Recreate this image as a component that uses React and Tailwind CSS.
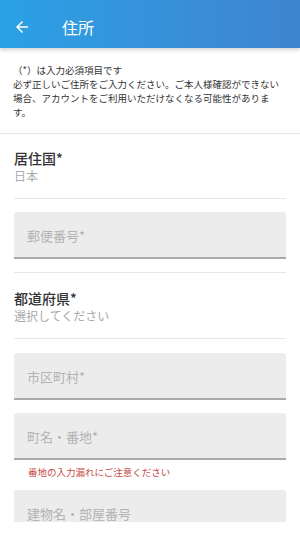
export default function App() {
  const jp = { fontFamily: '"Noto Sans CJK JP", "Noto Sans", sans-serif' };

  return (
    <div className="w-[300px] h-[556px] overflow-hidden bg-white" style={jp}>
      {/* Header */}
      <header className="relative z-10 h-12 pt-[5px] flex items-center bg-gradient-to-r from-[#29a1e6] to-[#3e84cf] text-white shadow-[0_2px_4px_rgba(0,0,0,0.18)]">
        <svg className="ml-[13px] w-[18px] h-[18px]" viewBox="0 0 24 24" fill="currentColor">
          <path d="M20 11H7.83l5.59-5.59L12 4l-8 8 8 8 1.41-1.41L7.83 13H20v-2z" />
        </svg>
        <h1 className="ml-[31px] text-[16px] leading-none font-normal">住所</h1>
      </header>

      {/* Intro */}
      <section className="pl-[13px] pr-[16px] pt-[15px] pb-[14px] border-b border-[#e6e6e6] text-[9.5px] leading-[14px] text-[#333]">
        <p>（*）は入力必須項目です</p>
        <p>必ず正しいご住所をご入力ください。ご本人様確認ができない場合、アカウントをご利用いただけなくなる可能性があります。</p>
      </section>

      {/* Form */}
      <section className="px-[14px]">
        <div className="pt-[14px] pb-[14px] border-b border-[#e6e6e6]">
          <div className="text-[14px] leading-[20px] font-medium text-[#333]">居住国*</div>
          <div className="text-[12px] leading-[16px] text-[#aaa]">日本</div>
        </div>

        <div className="mt-[13px] h-[47px] flex items-center pl-[13px] pt-[3px] bg-[#ececec] border-b-2 border-[#aaa] rounded-t-[3px] text-[13px] text-[#b3b3b3]">
          郵便番号*
        </div>

        <div className="mt-[13px] border-t border-[#e6e6e6] pt-[15px] pb-[14px] border-b">
          <div className="text-[14px] leading-[20px] font-medium text-[#333]">都道府県*</div>
          <div className="text-[12px] leading-[16px] text-[#aaa]">選択してください</div>
        </div>

        <div className="mt-[14px] h-[47px] flex items-center pl-[13px] pt-[3px] bg-[#ececec] border-b-2 border-[#aaa] rounded-t-[3px] text-[13px] text-[#b3b3b3]">
          市区町村*
        </div>

        <div className="mt-[13px] h-[47px] flex items-center pl-[13px] pt-[3px] bg-[#ececec] border-b-2 border-[#aaa] rounded-t-[3px] text-[13px] text-[#b3b3b3]">
          町名・番地*
        </div>
        <p className="mt-[5px] pl-[14px] text-[9.5px] leading-[14px] text-[#c44a46]">番地の入力漏れにご注意ください</p>

        <div className="mt-[11px] h-[32px] flex items-end pl-[13px] pb-[1px] bg-[#ececec] rounded-t-[3px] text-[13px] leading-[15px] text-[#b3b3b3]">
          建物名・部屋番号
        </div>
      </section>
    </div>
  );
}
